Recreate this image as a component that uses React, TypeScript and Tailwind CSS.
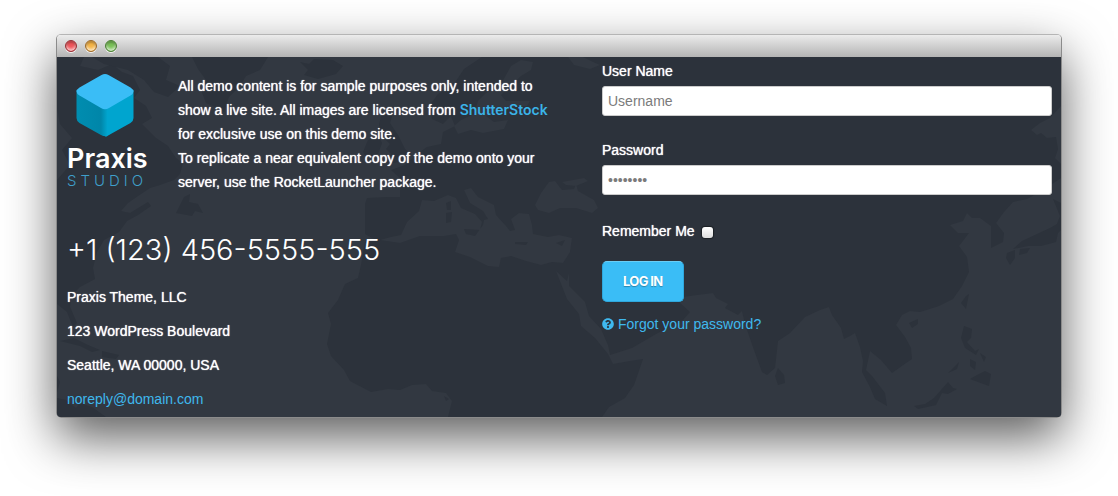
import { FaQuestionCircle } from 'react-icons/fa';

const LAND = 'fill-[#2c323b]';
const SEA = 'fill-[#323841]';

function WorldMap() {
  return (
    <svg
      aria-hidden="true"
      viewBox="57 57 1004 360"
      preserveAspectRatio="xMinYMin slice"
      className="absolute inset-0 -z-10 h-full w-full"
    >
      <g className={LAND}>
        {/* North America */}
        <path d="M57 57H84L80 66L98 70L112 64L122 72L133 76L140 90L134 98L146 106L152 118L142 124L156 138L168 146L176 158L183 163L180 174L174 180L160 185L150 188L138 196L128 203L121 211L130 213L148 202L151 206L138 215L127 221L119 232L104 240L97 252L93 268L95 279L80 287L71 296L70 307L77 323L73 327L67 312L57 304V180L70 165L62 150L72 138L60 124L57 108Z" />
        <path d="M92 57H158L170 66L166 80L180 86L168 97L154 92L144 80L128 70L104 64Z" />
        <path d="M176 213L184 197L190 194L189 202L198 204L203 213L195 211L192 216Z" />
        <path d="M60 341L74 338L88 345L100 350L92 352L80 346ZM102 351L119 355L116 359L102 357ZM57 376L60 382L57 392ZM57 398L66 400L76 408L80 403L92 407L106 417H57Z" />
        {/* Greenland and Iceland */}
        <path d="M192 57H268L260 70L246 76L240 86L229 97L224 112L217 108L206 103L201 90L206 80L198 69Z" />
        <path d="M300 62L309 64L314 59L333 60L343 66L336 74L318 79L304 75L308 70Z" />
        {/* British Isles */}
        <path d="M382 112L393 113L390 123L398 135L405 149L411 154L407 160L389 164L384 161L391 154L386 149L390 144L383 137L379 125ZM368 140L379 137L382 143L378 154L367 158L363 152Z" />
        {/* Eurasia and Africa */}
        <path d="M482 57L464 69L454 84L438 94L430 105L432 119L443 124L451 116L455 126L443 132L441 144L427 147L417 154L405 165L391 170L400 178L400 197L388 197L367 198L365 204V234L374 239L365 242L361 265L358 278L345 284L338 300L328 313L331 324L327 344L331 356L344 370L350 381L371 392L388 389L400 390L412 385L426 384L432 391L446 393L452 401L448 417H1061V57Z" />
      </g>
      <g className={SEA}>
        {/* Baltic and White Sea */}
        <path d="M474 114L461 120L454 126L458 134L471 130L483 133L504 129L508 120L494 122L486 116L502 108L527 106L530 101L506 101L501 95L521 76L531 70L533 62L521 60L511 66L501 84L486 93L478 101ZM568 57L574 65L590 69L600 65L591 61L583 57Z" />
        {/* Mediterranean */}
        <path d="M380 240L391 237L401 235L407 222L419 211L422 200L434 201L448 195L456 198L461 208L475 214L482 222L480 230L464 229L466 234L475 236L483 225L484 220L488 219L483 211L470 203L464 190L471 188L478 197L494 205L496 215L506 226L510 231L515 230L511 219L519 213L529 214L532 225L533 234L548 237L559 235L572 238L570 252L563 263L552 262L541 265L526 261L511 256L501 258L499 267L488 266L470 257L455 252L459 240L456 234L444 236L420 236L400 243Z" />
        {/* Black Sea */}
        <path d="M535 205L541 193L549 182L555 181L562 190L574 189L576 184L578 191L594 200L598 208L592 213L576 208L560 208L549 213L538 210Z" />
        <path d="M562 182L584 178L588 181L576 186L566 185Z" />
        {/* Indian Ocean and western Pacific */}
        <path d="M602 417L609 407L625 398L634 385L643 359L630 361L613 364L608 354L595 338L581 326L579 314L567 299L556 271L567 281L569 273L569 286L585 302L589 316L601 329L608 345L610 355L632 348L656 334L683 320L690 312L680 303L683 297L697 295L713 293L716 298L728 304L725 308L738 315L742 311L745 324L754 350L762 372L767 375L775 368L778 341L790 333L805 317L820 310L829 307L832 315L841 328L844 339L850 336L855 333L860 347L863 361L862 372L870 387L875 399L887 406L885 393L872 376L866 370L870 351L881 360L892 373L906 363L912 359L911 348L905 337L896 325L902 315L910 311L920 312L939 306L953 299L962 286L969 272L967 257L959 246L969 233L958 233L950 225L963 221L967 213L972 218L980 218L991 226L991 248L1003 242L1004 233L996 223L1004 212L1013 202L1027 199L1040 192L1061 178V417Z" />
        <path d="M1061 106L1050 118L1040 123L1031 130L1037 135L1041 133L1047 138L1056 137L1058 149L1055 158L1061 164Z" />
      </g>
      <g className={LAND}>
        {/* Mediterranean and Asian islands */}
        <path d="M446 203L451 201L451 210L447 210ZM446 213L452 212L451 222L446 223ZM515 242L528 242L526 245L515 244ZM556 243L565 240L562 246Z" />
        <path d="M778 368L784 375L785 383L778 385L775 376ZM909 323L918 319L918 324L912 328ZM966 296L969 294L966 309L961 303Z" />
        <path d="M1061 203L1053 199L1060 216L1057 224L1050 228L1037 234L1022 241L1013 249L1028 246L1041 246L1056 242L1058 233L1061 230ZM1007 253L1015 250L1015 258L1010 265L1006 258ZM1020 249L1030 248L1027 253L1019 255Z" />
        <path d="M964 326L972 329L971 338L967 342L975 351L979 349L976 355L965 348L961 338ZM948 373L959 362L957 369ZM980 353L986 357L984 362ZM970 359L976 362L975 370L970 366ZM985 371L991 374L989 386L978 382L970 379L977 375ZM914 406L925 404L934 398L948 382L953 388L957 389L948 394L942 393L936 405L918 409Z" />
        <path d="M444 396L449 399L446 401Z" />
      </g>
    </svg>
  );
}

function CubeLogo() {
  return (
    <svg aria-hidden="true" viewBox="0 0 58 64" className="h-16 w-[58px]">
      <defs>
        <linearGradient id="left-face" x1="0" x2="1">
          <stop offset="0" stopColor="#008db0" />
          <stop offset="0.8" stopColor="#0086a9" />
          <stop offset="1" stopColor="#00a3cc" />
        </linearGradient>
      </defs>
      <path fill="#00a5cf" d="M29 35L57.500 17V45Q57.500 48 54.500 50L33 62Q31 63.500 29 63.500Z" />
      <path fill="url(#left-face)" d="M.5 17L31 35V63.300Q27 63.500 25 62L3.500 50Q.5 48 .5 45Z" />
      <path
        fill="#3abdf6"
        d="M25.500 2Q29 0 32.500 2L54.500 14.500Q60.500 18.500 54.500 22.500L33 35Q29 37.500 25 35L3.500 22.500Q-2.500 18.500 3.500 14.500Z"
      />
    </svg>
  );
}

function TrafficLight({ tone }: { tone: string }) {
  return (
    <span
      className={`h-3 w-3 rounded-full border shadow-[0_1px_0_#f0f0f0,inset_0_2px_2px_rgba(0,0,0,0.25),inset_0_-2px_3px_rgba(255,255,255,0.7)] ${tone}`}
    />
  );
}

const address = ['Praxis Theme, LLC', '123 WordPress Boulevard', 'Seattle, WA 00000, USA'];

const labelStyle = 'block text-white [text-shadow:0_0_1px_#fff]';
const inputStyle =
  'mt-[3px] block h-[30px] w-full rounded-[3px] border border-[#cccccc] bg-white px-[5px] text-sm text-[#555555] placeholder:text-[#7b7b7b] outline-none';

export default function App() {
  return (
    <main className="bg-white px-14 pt-[34px] pb-[78px] font-['Liberation_Sans',Arial,sans-serif] text-sm leading-6">
      <div className="overflow-hidden rounded-[5px] border border-[#8b8b8b] border-t-[#b5b5b5] shadow-[0_20px_50px_rgba(0,0,0,0.63)]">
        <header className="flex h-[22px] items-center gap-2 bg-linear-to-b from-[#ececec] to-[#b4b4b4] px-2">
          <TrafficLight tone="border-[#943136] bg-[#f0545a]" />
          <TrafficLight tone="border-[#99672b] bg-[#f5b445]" />
          <TrafficLight tone="border-[#4b7d35] bg-[#79c157]" />
        </header>

        <div className="relative isolate grid grid-cols-[11fr_10fr] gap-10 bg-[#323841] pr-[9px] pb-[6px] pl-[10px]">
          <WorldMap />

          <section className="pt-4">
            <div className="flex gap-[30px]">
              <div className="flex w-[81px] shrink-0 flex-col font-['Inter',sans-serif]">
                <div className="pl-[9px]">
                  <CubeLogo />
                </div>
                <span className="mt-2 text-[27px] leading-7 font-semibold text-white">Praxis</span>
                <span className="text-[15px] leading-4 font-light tracking-[4px] text-[#3f9fca]">STUDIO</span>
              </div>
              <p className="mt-px max-w-[380px] text-white [text-shadow:0_0_1px_#fff]">
                All demo content is for sample purposes only, intended to show a live site. All images are licensed
                from{' '}
                <a
                  href="#shutterstock"
                  className="font-['Inter',sans-serif] leading-none font-semibold text-[#3bb3e8] [text-shadow:none]"
                >
                  ShutterStock
                </a>{' '}
                for exclusive use on this demo site.
                <br />
                To replicate a near equivalent copy of the demo onto your server, use the RocketLauncher package.
              </p>
            </div>

            <h2 className="mt-9 font-['Inter',sans-serif] text-[29px] leading-10 font-light text-white">
              +1 (123) 456-5555-555
            </h2>

            <address className="mt-[15px] flex flex-col gap-[10px] text-white not-italic">
              {address.map((line) => (
                <span key={line} className="[text-shadow:0_0_1px_#fff]">
                  {line}
                </span>
              ))}
              <a href="mailto:noreply@domain.com" className="text-[#3fb8ee]">
                noreply@domain.com
              </a>
            </address>
          </section>

          <form className="pt-0.5" onSubmit={(event) => event.preventDefault()}>
            <label htmlFor="username" className={labelStyle}>
              User Name
            </label>
            <input id="username" type="text" placeholder="Username" className={inputStyle} />

            <label htmlFor="password" className={`mt-[22px] ${labelStyle}`}>
              Password
            </label>
            <input id="password" type="password" placeholder="••••••••" className={inputStyle} />

            <div className="mt-6 flex items-center gap-[7px]">
              <label htmlFor="remember" className={labelStyle}>
                Remember Me
              </label>
              <input
                id="remember"
                type="checkbox"
                className="mt-0.5 h-[11px] w-[11px] appearance-none rounded-[3px] bg-linear-to-b from-white to-[#dddddd] shadow-[0_0_1px_1px_rgba(0,0,0,0.4)] checked:from-[#3abdf6] checked:to-[#3abdf6]"
              />
            </div>

            <button
              type="submit"
              className="mt-[18px] block h-[41px] rounded-[5px] border border-[#2fa7dc] border-t-[#6acdf5] bg-[#3abdf6] px-5 pb-0.5 font-['Inter',sans-serif] text-[13px] font-bold tracking-tighter text-white [text-shadow:0_1px_1px_rgba(0,0,0,0.3)]"
            >
              LOG IN
            </button>

            <a href="#forgot" className="mt-[10px] inline-flex items-center gap-1 text-[#3fb8ee]">
              <FaQuestionCircle aria-hidden="true" className="h-3 w-3" />
              Forgot your password?
            </a>
          </form>
        </div>
      </div>
    </main>
  );
}
